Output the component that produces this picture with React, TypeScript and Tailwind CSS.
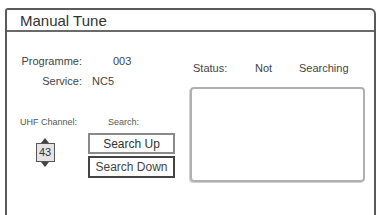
import React from "react";

export default function App() {
  return (
    <div className="w-[379px] h-[215px] bg-white overflow-hidden pt-[8px] pl-[5px] font-['Liberation_Sans',Arial,sans-serif] text-[#444]">
      <div className="w-[371px] h-[207px] border-2 border-b-0 border-[#5a5a5a] rounded-tr-[6px] rounded-tl-[3px] flex flex-col">
        <div className="h-[22px] border-b-2 border-[#6a6a6a] pl-[13px] flex items-center text-[15px] leading-none text-[#333]">
          Manual Tune
        </div>
        <div className="flex flex-1">
          {/* left column */}
          <div className="w-[183px] pl-[13px] flex flex-col">
            <div className="mt-[19px] flex items-center h-[20px] text-[11px]">
              <span className="w-[62px] text-right">Programme:</span>
              <span className="ml-[31px]">003</span>
            </div>
            <div className="flex items-center h-[20px] text-[11px]">
              <span className="w-[62px] text-right">Service:</span>
              <span className="ml-[10px]">NC5</span>
            </div>
            <div className="mt-[26px] flex items-center h-[12px] text-[9px] text-[#555]">
              <span className="w-[88px]">UHF Channel:</span>
              <span>Search:</span>
            </div>
            <div className="flex mt-[4px]">
              <div className="w-[68px] flex flex-col items-center pt-[5px] pr-[18px]">
                <svg width="10" height="5" viewBox="0 0 10 5" className="block">
                  <polygon points="5,0 9,5 1,5" fill="#444" />
                </svg>
                <div className="w-[19px] h-[19px] border-[1.5px] border-[#555] bg-[#e4e4e4] flex items-center justify-center text-[11px] text-[#333]">
                  43
                </div>
                <svg width="10" height="5" viewBox="0 0 10 5" className="block">
                  <polygon points="1,0 9,0 5,5" fill="#444" />
                </svg>
              </div>
              <div className="flex flex-col gap-[2px]">
                <div className="w-[87px] h-[21px] border-2 border-[#8a8a8a] flex items-center justify-center text-[12px] text-[#333]">
                  Search Up
                </div>
                <div className="w-[87px] h-[22px] border-2 border-[#444] flex items-center justify-center text-[12px] text-[#444]">
                  Search Down
                </div>
              </div>
            </div>
          </div>
          {/* right column */}
          <div className="flex flex-col">
            <div className="mt-[29px] h-[14px] flex items-center text-[11px] text-[#444]">
              <span className="ml-[3px] w-[62px]">Status:</span>
              <span className="w-[44px]">Not</span>
              <span>Searching</span>
            </div>
            <div className="mt-[12px] w-[175px] h-[95px] border-2 border-[#b0b0b0] rounded-[4px] shadow-[-1px_1px_0_#d0d0d0]"></div>
          </div>
        </div>
      </div>
    </div>
  );
}
